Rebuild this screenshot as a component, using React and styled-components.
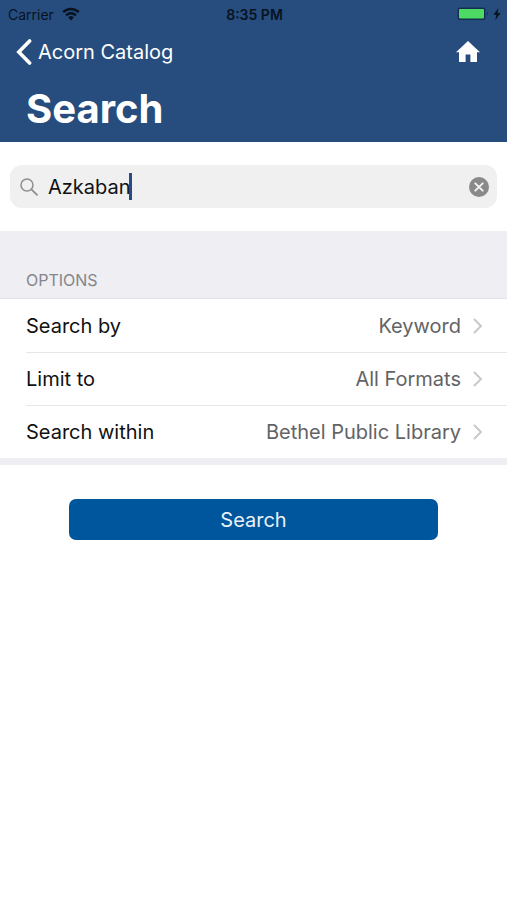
import React, { useState } from "react";

import styled, { createGlobalStyle } from "styled-components";

const options = [
  { label: "Search by", value: "Keyword" },
  { label: "Limit to", value: "All Formats" },
  { label: "Search within", value: "Bethel Public Library" },
];

const App = () => {
  const [query, setQuery] = useState("Azkaban");

  return (
    <>
      <GlobalStyle />
      <Header>
        <StatusBar>
          <Carrier>
            Carrier
            <WifiIcon />
          </Carrier>
          <Time>8:35 PM</Time>
          <Power>
            <BatteryIcon />
            <BoltIcon />
          </Power>
        </StatusBar>
        <NavBar>
          <BackLink href="#catalog">
            <BackIcon />
            Acorn Catalog
          </BackLink>
          <HomeLink href="#home" aria-label="Home">
            <HomeIcon />
          </HomeLink>
        </NavBar>
        <Title>Search</Title>
      </Header>
      <form onSubmit={(e) => e.preventDefault()}>
        <SearchArea>
          <SearchField>
            <FieldLabel htmlFor="query">
              <SearchIcon />
              <QueryInput
                id="query"
                type="text"
                aria-label="Search the catalog"
                value={query}
                onChange={(e) => setQuery(e.target.value)}
              />
              <Caret />
            </FieldLabel>
            <ClearButton
              type="button"
              aria-label="Clear"
              onClick={() => setQuery("")}
            >
              <ClearIcon />
            </ClearButton>
          </SearchField>
        </SearchArea>
        <Options>
          <OptionsTitle>OPTIONS</OptionsTitle>
          <OptionList>
            {options.map((option) => (
              <OptionItem key={option.label}>
                <OptionButton type="button">
                  <span>{option.label}</span>
                  <OptionValue>{option.value}</OptionValue>
                  <ChevronIcon />
                </OptionButton>
              </OptionItem>
            ))}
          </OptionList>
        </Options>
        <Actions>
          <SubmitButton type="submit">Search</SubmitButton>
        </Actions>
      </form>
    </>
  );
};

const WifiIcon = () => (
  <svg width="18" height="14" viewBox="0 0 18 14" aria-hidden="true">
    <g fill="none" stroke="#08131f" strokeWidth="2.4">
      <path d="M1.2 5.2a11 11 0 0 1 15.6 0" />
      <path d="M4.1 8.3a7 7 0 0 1 9.8 0" />
    </g>
    <path d="M9 13.4 6.2 10.4a4 4 0 0 1 5.6 0z" fill="#08131f" />
  </svg>
);

const BatteryIcon = () => (
  <svg width="32" height="14" viewBox="0 0 32 14" aria-hidden="true">
    <rect x="0.5" y="0.5" width="28" height="12.5" rx="2.5" fill="#15304f" />
    <rect x="2" y="2" width="25" height="9.5" rx="1" fill="#4cd964" />
    <path d="M30 5v3.6c1.4-.6 1.4-3 0-3.6z" fill="#15304f" />
  </svg>
);

const BoltIcon = () => (
  <svg width="8" height="12" viewBox="0 0 8 12" aria-hidden="true">
    <path d="M5.4 0 .4 6.7h2.9L2.4 12l5.2-7H4.5z" fill="#08131f" />
  </svg>
);

const BackIcon = () => (
  <svg width="16" height="28" viewBox="0 0 16 28" aria-hidden="true">
    <path
      d="M13.6 3 2.8 14l10.8 11"
      fill="none"
      stroke="#fff"
      strokeWidth="3.6"
      strokeLinecap="round"
    />
  </svg>
);

const HomeIcon = () => (
  <svg width="24" height="22" viewBox="0 0 24 22" aria-hidden="true">
    <path d="M12 0 0 11.2h3V21h6.6v-7.4h4.8V21H21v-9.8h3z" fill="#fff" />
  </svg>
);

const SearchIcon = () => (
  <svg width="18" height="18" viewBox="0 0 18 18" aria-hidden="true">
    <g fill="none" stroke="#8e8e93" strokeWidth="1.5" strokeLinecap="round">
      <circle cx="7" cy="7" r="6" />
      <path d="m11.4 11.4 5.6 5.4" strokeWidth="1.8" />
    </g>
  </svg>
);

const ClearIcon = () => (
  <svg width="20" height="20" viewBox="0 0 20 20" aria-hidden="true">
    <circle cx="10" cy="10" r="10" fill="#8a8a8d" />
    <path
      d="m6.3 6.3 7.4 7.4m0-7.4-7.4 7.4"
      stroke="#f5f5f5"
      strokeWidth="1.9"
      strokeLinecap="round"
    />
  </svg>
);

const ChevronIcon = () => (
  <svg width="10" height="16" viewBox="0 0 10 16" aria-hidden="true">
    <path
      d="m1 1 7 7-7 7"
      fill="none"
      stroke="#c7c7cc"
      strokeWidth="1.9"
    />
  </svg>
);

const GlobalStyle = createGlobalStyle`
  * {
    margin: 0;
    padding: 0;
    box-sizing: border-box;
  }
  body {
    background: #fff;
    color: #111;
    font-family: Inter, "Liberation Sans", sans-serif;
    font-size: 20px;
  }
  button,
  input {
    border: none;
    background: none;
    color: inherit;
    font: inherit;
  }
  a {
    color: inherit;
    text-decoration: none;
  }
  svg {
    display: block;
    flex-shrink: 0;
  }
`;

const Header = styled.header`
  background: #264d7e;
  color: #fff;
`;

const StatusBar = styled.div`
  display: grid;
  grid-template-columns: 1fr auto 1fr;
  align-items: center;
  height: 28px;
  padding: 0 6px 0 8px;
  color: #08131f;
  font-size: 14px;
`;

const Carrier = styled.div`
  display: flex;
  align-items: center;
  gap: 8px;
`;

const Time = styled.div`
  font-weight: 600;
`;

const Power = styled.div`
  display: flex;
  align-items: center;
  justify-content: flex-end;
  gap: 4px;
`;

const NavBar = styled.nav`
  display: flex;
  align-items: center;
  justify-content: space-between;
  height: 48px;
  padding: 0 27px 0 16px;
`;

const BackLink = styled.a`
  display: flex;
  align-items: center;
  gap: 6px;
`;

const HomeLink = styled.a`
  display: block;
`;

const Title = styled.h1`
  padding: 9px 26px;
  font-size: 40px;
  line-height: 48px;
  font-weight: 700;
`;

const SearchArea = styled.div`
  padding: 23px 10px;
`;

const SearchField = styled.div`
  display: flex;
  align-items: center;
  height: 43px;
  padding: 0 8px 0 10px;
  border-radius: 12px;
  background: #f0f0f1;
`;

const FieldLabel = styled.label`
  display: flex;
  flex: 1;
  align-items: center;
  min-width: 0;
  cursor: text;
`;

const QueryInput = styled.input`
  field-sizing: content;
  min-width: 1px;
  margin-left: 10px;
  outline: none;
  caret-color: transparent;
`;

const Caret = styled.span`
  width: 3px;
  height: 27px;
  margin-left: -2px;
  background: #264d7e;
`;

const ClearButton = styled.button`
  cursor: pointer;
`;

const Options = styled.section`
  padding-bottom: 7px;
  background: #eeeef3;
`;

const OptionsTitle = styled.h2`
  padding: 40px 26px 8px;
  color: #85858a;
  font-size: 16px;
  line-height: 19px;
  font-weight: 400;
`;

const OptionList = styled.ul`
  border-top: 1px solid #e2e2e6;
  background: #fff;
  list-style: none;
`;

const OptionItem = styled.li`
  padding-left: 26px;

  & + & > button {
    border-top: 1px solid #e6e6e9;
  }
`;

const OptionButton = styled.button`
  display: flex;
  align-items: center;
  width: 100%;
  min-height: 53px;
  padding-right: 24px;
  text-align: left;
  cursor: pointer;
`;

const OptionValue = styled.span`
  flex: 1;
  margin-right: 12px;
  color: #636366;
  text-align: right;
`;

const Actions = styled.div`
  padding: 34px 69px;
`;

const SubmitButton = styled.button`
  width: 100%;
  height: 41px;
  border-radius: 7px;
  background: #00569d;
  color: #e9f1f8;
  cursor: pointer;
`;

export default App;
